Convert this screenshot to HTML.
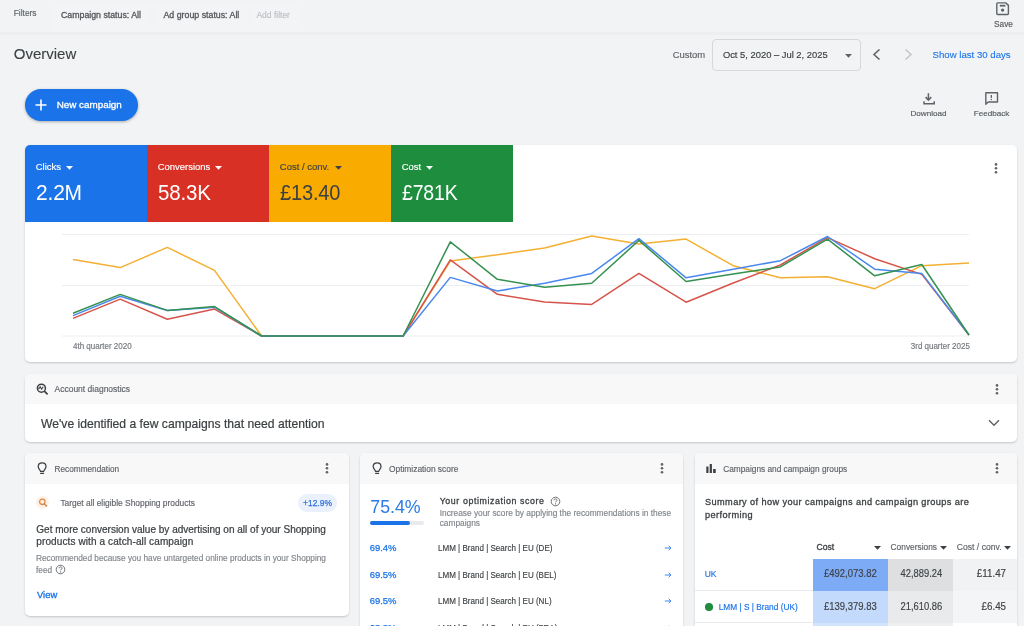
<!DOCTYPE html>
<html><head><meta charset="utf-8"><style>
html,body{margin:0;padding:0;}
body{width:1024px;height:626px;overflow:hidden;position:relative;background:#f1f3f4;font-family:"Liberation Sans",sans-serif;}
.t{position:absolute;white-space:nowrap;-webkit-text-stroke-width:0.15px;}
.r{position:absolute;}
.s{position:absolute;overflow:visible;}
#w{position:absolute;left:0;top:0;width:1024px;height:626px;overflow:hidden;background:#f1f3f4;filter:blur(0.35px);}
</style></head><body>
<div id="w">
<div class="r" style="left:0px;top:32px;width:1024px;height:3px;background:#edeef0;"></div>
<div class="t" style="left:13.75px;top:9.09px;font-size:8.4px;line-height:8.4px;color:#5f6368;font-weight:400;">Filters</div>
<div class="r" style="left:52px;top:3px;width:98px;height:28px;background:#f3f4f5;border-radius:4px;"></div>
<div class="r" style="left:154px;top:3px;width:94px;height:28px;background:#f3f4f5;border-radius:4px;"></div>
<div class="r" style="left:250px;top:3px;width:48px;height:28px;background:#f3f4f5;border-radius:4px;"></div>
<div class="t" style="left:61.00px;top:10.88px;font-size:8.77px;line-height:8.77px;color:#53575b;font-weight:400;-webkit-text-stroke:0.3px #53575b;">Campaign status: All</div>
<div class="t" style="left:163.50px;top:10.85px;font-size:8.8px;line-height:8.8px;color:#53575b;font-weight:400;-webkit-text-stroke:0.3px #53575b;">Ad group status: All</div>
<div class="t" style="left:256.40px;top:10.90px;font-size:8.5px;line-height:8.5px;color:#bdc1c6;font-weight:400;">Add filter</div>
<svg class="s" style="left:996px;top:2px" width="14" height="14" viewBox="0 0 14 14"><path d="M1.7 0.9h8.2l2.5 2.5v8.2c0 .5-.4.9-.9.9H1.7c-.5 0-.9-.4-.9-.9V1.8c0-.5.4-.9.9-.9z" fill="none" stroke="#5f6368" stroke-width="1.4"/><rect x="3.8" y="2.8" width="5.6" height="1.8" fill="#5f6368"/><circle cx="6.6" cy="8.1" r="1.7" fill="#5f6368"/></svg>
<div class="t" style="left:994.00px;top:19.97px;font-size:8.3px;line-height:8.3px;color:#575b5f;font-weight:400;">Save</div>
<div class="t" style="left:13.75px;top:46.10px;font-size:15px;line-height:15px;color:#3c4043;font-weight:400;-webkit-text-stroke-width:0.1px;">Overview</div>
<div class="t" style="left:672.70px;top:49.70px;font-size:9.45px;line-height:9.45px;color:#5f6368;font-weight:400;">Custom</div>
<div class="r" style="left:712px;top:39px;width:149px;height:32px;background:transparent;border:1px solid #d6d8db;border-radius:4px;box-sizing:border-box;"></div>
<div class="t" style="left:722.90px;top:49.74px;font-size:9.4px;line-height:9.4px;color:#3c4043;font-weight:400;">Oct 5, 2020 – Jul 2, 2025</div>
<svg class="s" style="left:844.5px;top:53.5px" width="7" height="4" viewBox="0 0 7 4"><path d="M0 0h7L3.5 3.8z" fill="#5f6368"/></svg>
<svg class="s" style="left:871px;top:48px" width="11" height="13" viewBox="0 0 11 13"><path d="M8.5 1.5L3 6.5l5.5 5" fill="none" stroke="#5f6368" stroke-width="1.6"/></svg>
<svg class="s" style="left:903px;top:48px" width="11" height="13" viewBox="0 0 11 13"><path d="M2.5 1.5L8 6.5l-5.5 5" fill="none" stroke="#c4c7ca" stroke-width="1.6"/></svg>
<div class="t" style="left:932.50px;top:50.25px;font-size:9.63px;line-height:9.63px;color:#1a73e8;font-weight:400;-webkit-text-stroke:0.1px #1a73e8;">Show last 30 days</div>
<div class="r" style="left:25px;top:89px;width:113px;height:32px;background:#1a73e8;border-radius:16px;box-shadow:0 1px 3px rgba(0,0,0,0.3);"></div>
<svg class="s" style="left:35px;top:99px" width="12" height="12" viewBox="0 0 12 12"><path d="M6 0.5v11M0.5 6h11" stroke="#fff" stroke-width="1.6"/></svg>
<div class="t" style="left:56.70px;top:100.05px;font-size:9.86px;line-height:9.86px;color:#fff;font-weight:400;-webkit-text-stroke:0.3px #fff;">New campaign</div>
<svg class="s" style="left:922px;top:92px" width="14" height="13" viewBox="0 0 14 13"><path d="M6.4 1.2v6.3" stroke="#5f6368" stroke-width="1.5"/><path d="M3.6 5.1l2.8 2.9 2.8-2.9" fill="none" stroke="#5f6368" stroke-width="1.6"/><path d="M2 9.2v2.5h10.2V9.2" fill="none" stroke="#5f6368" stroke-width="1.5"/></svg>
<div class="t" style="left:910.50px;top:109.94px;font-size:8.1px;line-height:8.1px;color:#575b5f;font-weight:400;">Download</div>
<svg class="s" style="left:984px;top:91px" width="15" height="15" viewBox="0 0 15 15"><path d="M1.8 1.8h11.7v9.2H4.2L1.8 13.3z" fill="none" stroke="#5f6368" stroke-width="1.4" stroke-linejoin="round"/><path d="M7.3 4v2.9" stroke="#5f6368" stroke-width="1.3"/><circle cx="7.3" cy="8.4" r=".75" fill="#5f6368"/></svg>
<div class="t" style="left:973.70px;top:109.94px;font-size:8.1px;line-height:8.1px;color:#575b5f;font-weight:400;">Feedback</div>
<div class="r" style="left:25px;top:145px;width:992px;height:217px;background:#fff;border-radius:5px;box-shadow:0 1px 2px rgba(60,64,67,0.24);"></div>
<div class="r" style="left:25px;top:145px;width:122px;height:76.6px;background:#1a73e8;border-top-left-radius:5px;"></div>
<div class="t" style="left:35.80px;top:162.10px;font-size:9.45px;line-height:9.45px;color:#fff;font-weight:400;-webkit-text-stroke:0.15px #fff;">Clicks</div>
<div class="r" style="left:147px;top:145px;width:122px;height:76.6px;background:#d93025;"></div>
<div class="t" style="left:157.80px;top:162.10px;font-size:9.45px;line-height:9.45px;color:#fff;font-weight:400;-webkit-text-stroke:0.15px #fff;">Conversions</div>
<div class="r" style="left:269px;top:145px;width:122px;height:76.6px;background:#f9ab00;"></div>
<div class="t" style="left:279.80px;top:162.06px;font-size:9.5px;line-height:9.5px;color:#3c4043;font-weight:400;-webkit-text-stroke:0.15px #3c4043;">Cost / conv.</div>
<div class="r" style="left:391px;top:145px;width:122px;height:76.6px;background:#1e8e3e;"></div>
<div class="t" style="left:401.80px;top:162.10px;font-size:9.45px;line-height:9.45px;color:#fff;font-weight:400;-webkit-text-stroke:0.15px #fff;">Cost</div>
<div class="t" style="left:35.60px;top:181.55px;font-size:22.5px;line-height:22.5px;color:#fff;font-weight:400;letter-spacing:-0.2px;-webkit-text-stroke-width:0;transform:scaleX(0.933);transform-origin:left center;">2.2M</div>
<div class="t" style="left:157.60px;top:181.55px;font-size:22.5px;line-height:22.5px;color:#fff;font-weight:400;letter-spacing:-0.2px;-webkit-text-stroke-width:0;transform:scaleX(0.911);transform-origin:left center;">58.3K</div>
<div class="t" style="left:279.60px;top:181.55px;font-size:22.5px;line-height:22.5px;color:#3c4043;font-weight:400;letter-spacing:-0.2px;-webkit-text-stroke-width:0;transform:scaleX(0.891);transform-origin:left center;">£13.40</div>
<div class="t" style="left:401.60px;top:181.55px;font-size:22.5px;line-height:22.5px;color:#fff;font-weight:400;letter-spacing:-0.2px;-webkit-text-stroke-width:0;transform:scaleX(0.866);transform-origin:left center;">£781K</div>
<svg class="s" style="left:66.0px;top:165.5px" width="7" height="4" viewBox="0 0 7 4"><path d="M0 0h7L3.5 3.8z" fill="#fff"/></svg>
<svg class="s" style="left:214.8px;top:165.5px" width="7" height="4" viewBox="0 0 7 4"><path d="M0 0h7L3.5 3.8z" fill="#fff"/></svg>
<svg class="s" style="left:334.5px;top:165.5px" width="7" height="4" viewBox="0 0 7 4"><path d="M0 0h7L3.5 3.8z" fill="#3c4043"/></svg>
<svg class="s" style="left:426.2px;top:165.5px" width="7" height="4" viewBox="0 0 7 4"><path d="M0 0h7L3.5 3.8z" fill="#fff"/></svg>
<svg class="s" style="left:994.4px;top:163px" width="4" height="11" viewBox="0 0 4 11"><circle cx="2" cy="1.4" r="1.3" fill="#5f6368"/><circle cx="2" cy="5.3" r="1.3" fill="#5f6368"/><circle cx="2" cy="9.2" r="1.3" fill="#5f6368"/></svg>
<svg class="s" style="left:0;top:0" width="1024" height="626" viewBox="0 0 1024 626"><line x1="62" y1="234.5" x2="969" y2="234.5" stroke="#eceef0" stroke-width="1"/><line x1="62" y1="285.6" x2="969" y2="285.6" stroke="#eceef0" stroke-width="1"/><line x1="62" y1="336" x2="969" y2="336" stroke="#eceef0" stroke-width="1"/><polyline points="73.0,259.4 120.2,267.6 167.3,247.4 214.5,270.4 261.6,336.0 308.8,336.0 355.9,336.0 403.1,336.0 450.3,261.0 497.4,254.7 544.6,248.1 591.7,236.0 638.9,244.1 686.1,239.1 733.2,265.7 780.4,277.8 827.5,276.8 874.7,288.7 921.8,265.7 969.0,262.9" fill="none" stroke="#f4b032" stroke-width="1.5" stroke-linejoin="round"/><polyline points="73.0,318.4 120.2,299.1 167.3,319.3 214.5,309.1 261.6,336.0 308.8,336.0 355.9,336.0 403.1,336.0 450.3,259.8 497.4,294.3 544.6,302.0 591.7,304.4 638.9,273.4 686.1,302.2 733.2,283.0 780.4,265.0 827.5,237.6 874.7,258.7 921.8,274.4 969.0,335.0" fill="none" stroke="#d6544a" stroke-width="1.5" stroke-linejoin="round"/><polyline points="73.0,315.6 120.2,296.2 167.3,310.6 214.5,307.2 261.6,336.0 308.8,336.0 355.9,336.0 403.1,336.0 450.3,277.4 497.4,291.0 544.6,283.3 591.7,273.4 638.9,238.7 686.1,277.8 733.2,269.2 780.4,260.7 827.5,236.5 874.7,269.2 921.8,273.4 969.0,335.0" fill="none" stroke="#4a88ee" stroke-width="1.5" stroke-linejoin="round"/><polyline points="73.0,313.2 120.2,294.4 167.3,310.4 214.5,306.6 261.6,336.0 308.8,336.0 355.9,336.0 403.1,336.0 450.3,241.8 497.4,279.3 544.6,287.3 591.7,283.3 638.9,240.4 686.1,281.5 733.2,274.0 780.4,266.9 827.5,239.1 874.7,275.8 921.8,264.5 969.0,335.0" fill="none" stroke="#359150" stroke-width="1.5" stroke-linejoin="round"/></svg>
<div class="t" style="left:72.80px;top:342.20px;font-size:8.5px;line-height:8.5px;color:#72767b;font-weight:400;transform:scaleX(0.94);transform-origin:left center;">4th quarter 2020</div>
<div class="t" style="right:54.60px;top:342.20px;font-size:8.5px;line-height:8.5px;color:#72767b;font-weight:400;transform:scaleX(0.94);transform-origin:right center;">3rd quarter 2025</div>
<div class="r" style="left:25px;top:374px;width:992px;height:68px;background:#fff;border-radius:5px;overflow:hidden;box-shadow:0 1px 2px rgba(60,64,67,0.24);"></div>
<div class="r" style="left:25px;top:374px;width:992px;height:30px;background:#f8f8f9;border-radius:5px 5px 0 0;"></div>
<svg class="s" style="left:36px;top:383px" width="13" height="13" viewBox="0 0 13 13"><circle cx="5.4" cy="5.2" r="4" fill="none" stroke="#3c4043" stroke-width="1.5"/><path d="M8.3 8.2l3.3 3.2" stroke="#3c4043" stroke-width="1.7"/><path d="M2.6 6.1l1.6-2.3 1.4 2.5 1.6-2.5" fill="none" stroke="#3c4043" stroke-width="1.1"/></svg>
<div class="t" style="left:54.50px;top:384.70px;font-size:8.5px;line-height:8.5px;color:#5f6368;font-weight:400;">Account diagnostics</div>
<svg class="s" style="left:994.5px;top:383.5px" width="4" height="11" viewBox="0 0 4 11"><circle cx="2" cy="1.4" r="1.3" fill="#5f6368"/><circle cx="2" cy="5.3" r="1.3" fill="#5f6368"/><circle cx="2" cy="9.2" r="1.3" fill="#5f6368"/></svg>
<div class="t" style="left:41.00px;top:417.92px;font-size:12.15px;line-height:12.15px;color:#3c4043;font-weight:400;-webkit-text-stroke:0.2px #3c4043;">We've identified a few campaigns that need attention</div>
<svg class="s" style="left:988px;top:419px" width="12" height="8" viewBox="0 0 12 8"><path d="M1 1.2l5 5 5-5" fill="none" stroke="#5f6368" stroke-width="1.5"/></svg>
<div class="r" style="left:25px;top:453px;width:324px;height:163px;background:#fff;border-radius:5px;box-shadow:0 1px 2px rgba(60,64,67,0.24);"></div>
<div class="r" style="left:25px;top:453px;width:324px;height:31px;background:#f8f8f9;border-radius:5px 5px 0 0;"></div>
<div class="r" style="left:360px;top:453px;width:323px;height:207px;background:#fff;border-radius:5px;box-shadow:0 1px 2px rgba(60,64,67,0.24);"></div>
<div class="r" style="left:360px;top:453px;width:323px;height:31px;background:#f8f8f9;border-radius:5px 5px 0 0;"></div>
<div class="r" style="left:695px;top:453px;width:322px;height:207px;background:#fff;border-radius:5px;box-shadow:0 1px 2px rgba(60,64,67,0.24);"></div>
<div class="r" style="left:695px;top:453px;width:322px;height:31px;background:#f8f8f9;border-radius:5px 5px 0 0;"></div>
<svg class="s" style="left:37px;top:462px" width="10" height="13" viewBox="0 0 10 13"><path d="M3.5 9.3C3.3 7.9 1.2 6.7 1.2 4.4 1.2 2.3 2.9 0.8 5.1 0.8S9 2.3 9 4.4C9 6.7 6.9 7.9 6.7 9.3Z" fill="none" stroke="#3c4043" stroke-width="1.25" stroke-linejoin="round"/><path d="M3.6 11.4h3" stroke="#3c4043" stroke-width="1.1" stroke-linecap="round"/></svg>
<div class="t" style="left:54.50px;top:465.62px;font-size:8.25px;line-height:8.25px;color:#5f6368;font-weight:400;">Recommendation</div>
<svg class="s" style="left:325.4px;top:463px" width="4" height="11" viewBox="0 0 4 11"><circle cx="2" cy="1.4" r="1.3" fill="#5f6368"/><circle cx="2" cy="5.3" r="1.3" fill="#5f6368"/><circle cx="2" cy="9.2" r="1.3" fill="#5f6368"/></svg>
<div class="r" style="left:36px;top:496px;width:13px;height:13px;border-radius:50%;background:#fdf1e6;"></div>
<svg class="s" style="left:38px;top:498px" width="10" height="10" viewBox="0 0 10 10"><circle cx="4.3" cy="3.8" r="2.7" fill="none" stroke="#e0884a" stroke-width="1.3"/><path d="M6.2 5.8l2.7 2.8" stroke="#c98a50" stroke-width="1.4"/></svg>
<div class="t" style="left:60.40px;top:499.29px;font-size:8.4px;line-height:8.4px;color:#5f6368;font-weight:400;">Target all eligible Shopping products</div>
<div class="r" style="left:298px;top:494px;width:39px;height:18px;background:#eaf1fd;border-radius:9px;"></div>
<div class="t" style="left:303.20px;top:499.10px;font-size:9.1px;line-height:9.1px;color:#2f6fd6;font-weight:400;-webkit-text-stroke:0.25px #2f6fd6;transform:scaleX(0.93);transform-origin:left center;">+12.9%</div>
<div class="t" style="left:36.30px;top:524.71px;font-size:10.03px;line-height:10.03px;color:#3c4043;font-weight:400;-webkit-text-stroke:0.22px #3c4043;">Get more conversion value by advertising on all of your Shopping</div>
<div class="t" style="left:36.30px;top:537.41px;font-size:10.03px;line-height:10.03px;color:#3c4043;font-weight:400;-webkit-text-stroke:0.22px #3c4043;letter-spacing:0.1px;">products with a catch-all campaign</div>
<div class="t" style="left:36.00px;top:555.40px;font-size:8.27px;line-height:8.27px;color:#80868b;font-weight:400;">Recommended because you have untargeted online products in your Shopping</div>
<div class="t" style="left:36.00px;top:566.60px;font-size:8.27px;line-height:8.27px;color:#80868b;font-weight:400;">feed</div>
<svg class="s" style="left:55px;top:564px" width="11" height="11" viewBox="0 0 11 11"><circle cx="5.5" cy="5.5" r="4.3" fill="none" stroke="#5f6368" stroke-width="0.9"/><path d="M4 4.3c0-.9.7-1.4 1.5-1.4s1.5.5 1.5 1.3c0 1-1.4 1-1.4 2.2" fill="none" stroke="#5f6368" stroke-width="0.9"/><circle cx="5.6" cy="7.9" r=".6" fill="#5f6368"/></svg>
<div class="t" style="left:37.00px;top:589.74px;font-size:9.4px;line-height:9.4px;color:#1a73e8;font-weight:400;-webkit-text-stroke:0.3px #1a73e8;">View</div>
<svg class="s" style="left:372px;top:462px" width="10" height="13" viewBox="0 0 10 13"><path d="M3.5 9.3C3.3 7.9 1.2 6.7 1.2 4.4 1.2 2.3 2.9 0.8 5.1 0.8S9 2.3 9 4.4C9 6.7 6.9 7.9 6.7 9.3Z" fill="none" stroke="#3c4043" stroke-width="1.25" stroke-linejoin="round"/><path d="M3.6 11.4h3" stroke="#3c4043" stroke-width="1.1" stroke-linecap="round"/></svg>
<div class="t" style="left:389.00px;top:465.09px;font-size:8.4px;line-height:8.4px;color:#5f6368;font-weight:400;">Optimization score</div>
<svg class="s" style="left:660px;top:463px" width="4" height="11" viewBox="0 0 4 11"><circle cx="2" cy="1.4" r="1.3" fill="#5f6368"/><circle cx="2" cy="5.3" r="1.3" fill="#5f6368"/><circle cx="2" cy="9.2" r="1.3" fill="#5f6368"/></svg>
<div class="t" style="left:370.30px;top:499.07px;font-size:17.75px;line-height:17.75px;color:#2a7be6;font-weight:400;-webkit-text-stroke-width:0;">75.4%</div>
<div class="r" style="left:370px;top:520.5px;width:54px;height:4.5px;background:#e8eaed;border-radius:3px;"></div>
<div class="r" style="left:370px;top:520.5px;width:40px;height:4.5px;background:#1a73e8;border-radius:3px;"></div>
<div class="t" style="left:439.70px;top:497.15px;font-size:8.8px;line-height:8.8px;color:#3c4043;font-weight:400;-webkit-text-stroke:0.3px #3c4043;letter-spacing:0.6px;">Your optimization score</div>
<svg class="s" style="left:550px;top:495.5px" width="11" height="11" viewBox="0 0 11 11"><circle cx="5.5" cy="5.5" r="4.3" fill="none" stroke="#5f6368" stroke-width="0.9"/><path d="M4 4.3c0-.9.7-1.4 1.5-1.4s1.5.5 1.5 1.3c0 1-1.4 1-1.4 2.2" fill="none" stroke="#5f6368" stroke-width="0.9"/><circle cx="5.6" cy="7.9" r=".6" fill="#5f6368"/></svg>
<div class="t" style="left:439.70px;top:509.05px;font-size:8.33px;line-height:8.33px;color:#80868b;font-weight:400;">Increase your score by applying the recommendations in these</div>
<div class="t" style="left:439.70px;top:519.35px;font-size:8.33px;line-height:8.33px;color:#80868b;font-weight:400;">campaigns</div>
<div class="t" style="left:369.70px;top:543.30px;font-size:9.45px;line-height:9.45px;color:#1a73e8;font-weight:400;-webkit-text-stroke:0.25px #1a73e8;">69.4%</div>
<div class="t" style="left:438.40px;top:543.26px;font-size:9.5px;line-height:9.5px;color:#3c4043;font-weight:400;transform:scaleX(0.847);transform-origin:left center;">LMM | Brand | Search | EU (DE)</div>
<svg class="s" style="left:663.5px;top:544.3px" width="9" height="8" viewBox="0 0 9 8"><path d="M0.8 4h6" stroke="#3b82e8" stroke-width="0.95"/><path d="M4.7 1.8L7 4 4.7 6.2" fill="none" stroke="#3b82e8" stroke-width="0.95"/></svg>
<div class="t" style="left:369.70px;top:569.60px;font-size:9.45px;line-height:9.45px;color:#1a73e8;font-weight:400;-webkit-text-stroke:0.25px #1a73e8;">69.5%</div>
<div class="t" style="left:438.40px;top:569.56px;font-size:9.5px;line-height:9.5px;color:#3c4043;font-weight:400;transform:scaleX(0.847);transform-origin:left center;">LMM | Brand | Search | EU (BEL)</div>
<svg class="s" style="left:663.5px;top:570.6px" width="9" height="8" viewBox="0 0 9 8"><path d="M0.8 4h6" stroke="#3b82e8" stroke-width="0.95"/><path d="M4.7 1.8L7 4 4.7 6.2" fill="none" stroke="#3b82e8" stroke-width="0.95"/></svg>
<div class="t" style="left:369.70px;top:596.30px;font-size:9.45px;line-height:9.45px;color:#1a73e8;font-weight:400;-webkit-text-stroke:0.25px #1a73e8;">69.5%</div>
<div class="t" style="left:438.40px;top:596.26px;font-size:9.5px;line-height:9.5px;color:#3c4043;font-weight:400;transform:scaleX(0.847);transform-origin:left center;">LMM | Brand | Search | EU (NL)</div>
<svg class="s" style="left:663.5px;top:597.3px" width="9" height="8" viewBox="0 0 9 8"><path d="M0.8 4h6" stroke="#3b82e8" stroke-width="0.95"/><path d="M4.7 1.8L7 4 4.7 6.2" fill="none" stroke="#3b82e8" stroke-width="0.95"/></svg>
<div class="t" style="left:369.70px;top:623.30px;font-size:9.45px;line-height:9.45px;color:#1a73e8;font-weight:400;-webkit-text-stroke:0.25px #1a73e8;">68.8%</div>
<div class="t" style="left:438.40px;top:623.26px;font-size:9.5px;line-height:9.5px;color:#3c4043;font-weight:400;transform:scaleX(0.847);transform-origin:left center;">LMM | Brand | Search | EU (FRA)</div>
<svg class="s" style="left:663.5px;top:624.3px" width="9" height="8" viewBox="0 0 9 8"><path d="M0.8 4h6" stroke="#3b82e8" stroke-width="0.95"/><path d="M4.7 1.8L7 4 4.7 6.2" fill="none" stroke="#3b82e8" stroke-width="0.95"/></svg>
<svg class="s" style="left:706px;top:464px" width="11" height="9" viewBox="0 0 11 9"><rect x="0.3" y="2.5" width="2.2" height="6.5" fill="#3c4043"/><rect x="3.7" y="0" width="2.2" height="9" fill="#3c4043"/><rect x="7.1" y="5" width="2.6" height="4" fill="#3c4043"/></svg>
<div class="t" style="left:723.20px;top:465.17px;font-size:8.3px;line-height:8.3px;color:#5f6368;font-weight:400;">Campaigns and campaign groups</div>
<svg class="s" style="left:994.6px;top:463px" width="4" height="11" viewBox="0 0 4 11"><circle cx="2" cy="1.4" r="1.3" fill="#5f6368"/><circle cx="2" cy="5.3" r="1.3" fill="#5f6368"/><circle cx="2" cy="9.2" r="1.3" fill="#5f6368"/></svg>
<div class="t" style="left:705.00px;top:497.71px;font-size:9.2px;line-height:9.2px;color:#3c4043;font-weight:400;-webkit-text-stroke:0.3px #3c4043;letter-spacing:0.4px;">Summary of how your campaigns and campaign groups are</div>
<div class="t" style="left:705.00px;top:511.01px;font-size:9.2px;line-height:9.2px;color:#3c4043;font-weight:400;-webkit-text-stroke:0.3px #3c4043;letter-spacing:0.4px;">performing</div>
<div class="t" style="left:816.50px;top:542.92px;font-size:8.6px;line-height:8.6px;color:#3c4043;font-weight:400;-webkit-text-stroke:0.3px #3c4043;">Cost</div>
<div class="t" style="left:890.60px;top:543.13px;font-size:8.35px;line-height:8.35px;color:#5f6368;font-weight:400;">Conversions</div>
<div class="t" style="left:956.80px;top:542.92px;font-size:8.6px;line-height:8.6px;color:#5f6368;font-weight:400;">Cost / conv.</div>
<svg class="s" style="left:873.5px;top:546px" width="7" height="4" viewBox="0 0 7 4"><path d="M0 0h7L3.5 3.8z" fill="#3c4043"/></svg>
<svg class="s" style="left:939.5px;top:546px" width="7" height="4" viewBox="0 0 7 4"><path d="M0 0h7L3.5 3.8z" fill="#3c4043"/></svg>
<svg class="s" style="left:1004px;top:546px" width="7" height="4" viewBox="0 0 7 4"><path d="M0 0h7L3.5 3.8z" fill="#3c4043"/></svg>
<div class="r" style="left:695px;top:590px;width:118px;height:1px;background:#e8eaed;"></div>
<div class="r" style="left:695px;top:622px;width:118px;height:1px;background:#e8eaed;"></div>
<div class="r" style="left:813px;top:559px;width:75px;height:31.5px;background:#7eabf5;"></div>
<div class="r" style="left:888px;top:559px;width:65px;height:31.5px;background:#dedfe0;"></div>
<div class="r" style="left:953px;top:559px;width:64px;height:31.5px;background:#f1f2f3;"></div>
<div class="r" style="left:813px;top:590.5px;width:75px;height:32.5px;background:#c4dafc;"></div>
<div class="r" style="left:888px;top:590.5px;width:65px;height:32.5px;background:#e9eaeb;"></div>
<div class="r" style="left:953px;top:590.5px;width:64px;height:32.5px;background:#f4f5f6;"></div>
<div class="r" style="left:813px;top:623px;width:75px;height:37px;background:#d2e3fc;"></div>
<div class="r" style="left:888px;top:623px;width:65px;height:37px;background:#eeeff0;"></div>
<div class="t" style="left:704.70px;top:570.10px;font-size:8.5px;line-height:8.5px;color:#1a73e8;font-weight:400;">UK</div>
<div class="t" style="right:147.40px;top:569.10px;font-size:10.4px;line-height:10.4px;color:#3c4043;font-weight:400;transform:scaleX(0.915);transform-origin:right center;">£492,073.82</div>
<div class="t" style="right:81.90px;top:569.10px;font-size:10.4px;line-height:10.4px;color:#3c4043;font-weight:400;transform:scaleX(0.903);transform-origin:right center;">42,889.24</div>
<div class="t" style="right:17.60px;top:569.10px;font-size:10.4px;line-height:10.4px;color:#3c4043;font-weight:400;transform:scaleX(0.94);transform-origin:right center;">£11.47</div>
<div class="r" style="left:705px;top:603px;width:7.6px;height:7.6px;border-radius:50%;background:#1e8e3e;"></div>
<div class="t" style="left:718.70px;top:602.97px;font-size:8.3px;line-height:8.3px;color:#1a73e8;font-weight:400;">LMM | S | Brand (UK)</div>
<div class="t" style="right:147.40px;top:601.60px;font-size:10.4px;line-height:10.4px;color:#3c4043;font-weight:400;transform:scaleX(0.915);transform-origin:right center;">£139,379.83</div>
<div class="t" style="right:81.90px;top:601.60px;font-size:10.4px;line-height:10.4px;color:#3c4043;font-weight:400;transform:scaleX(0.903);transform-origin:right center;">21,610.86</div>
<div class="t" style="right:17.60px;top:601.60px;font-size:10.4px;line-height:10.4px;color:#3c4043;font-weight:400;transform:scaleX(0.94);transform-origin:right center;">£6.45</div>
</div></body></html>
